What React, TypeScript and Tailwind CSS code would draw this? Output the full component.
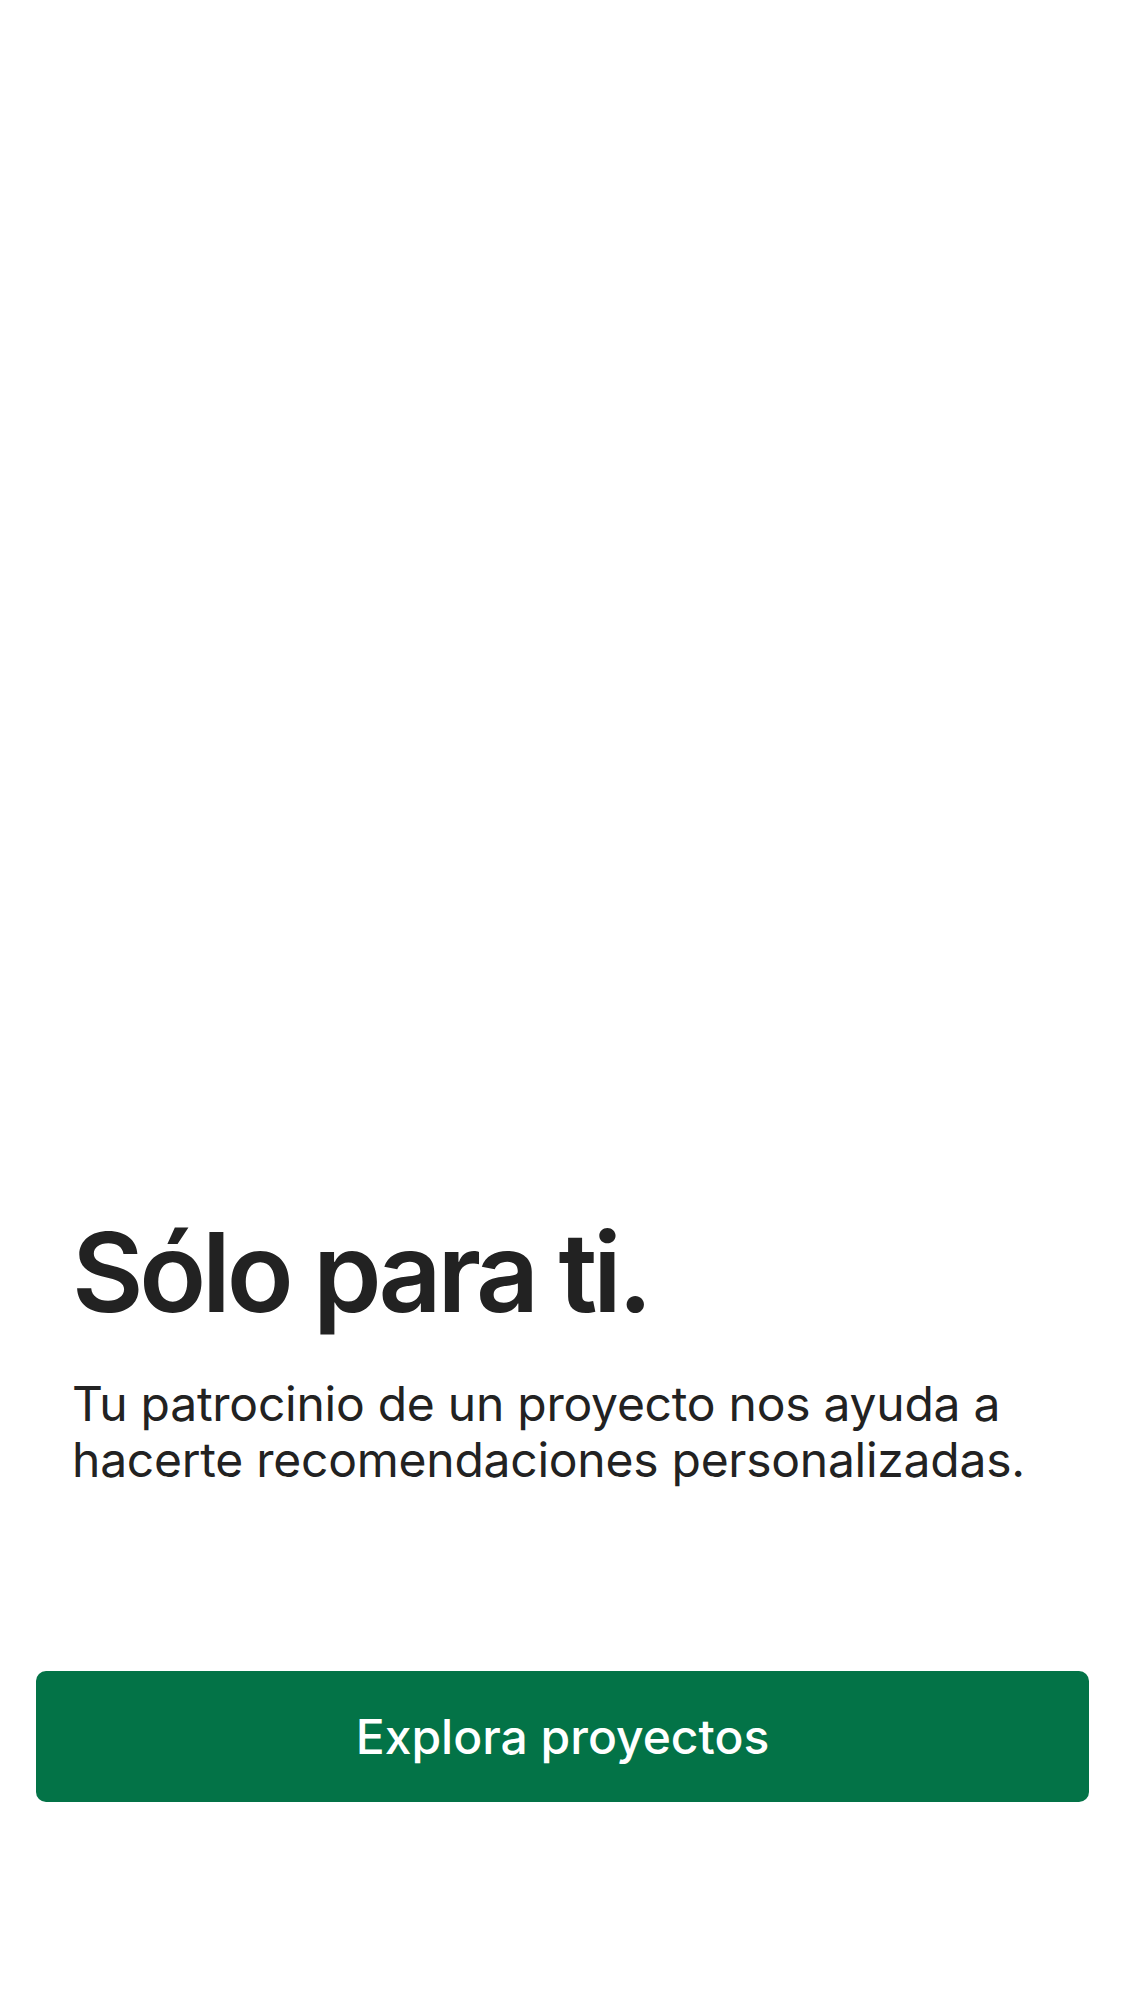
import React from "react";

export default function App() {
  return (
    <div className="flex h-[2001px] w-full flex-col bg-white" style={{ fontFamily: "Inter, 'Noto Sans', sans-serif" }}>
      <div className="flex-1" />
      <div className="px-[72px]">
        <h1 className="text-[110px] font-semibold leading-[110px] tracking-[-4.2px] text-[#222222]">Sólo para ti.</h1>
        <p className="mt-[49px] text-[48px] leading-[56px] tracking-[-0.25px] text-[#222222]">
          Tu patrocinio de un proyecto nos ayuda a hacerte recomendaciones personalizadas.
        </p>
      </div>
      <div className="mt-[183px] px-[36px]">
        <button className="flex h-[131px] w-full items-center justify-center rounded-[10px] bg-[#037347] text-[48px] font-medium text-white">
          Explora proyectos
        </button>
      </div>
      <div className="h-[199px]" />
    </div>
  );
}
